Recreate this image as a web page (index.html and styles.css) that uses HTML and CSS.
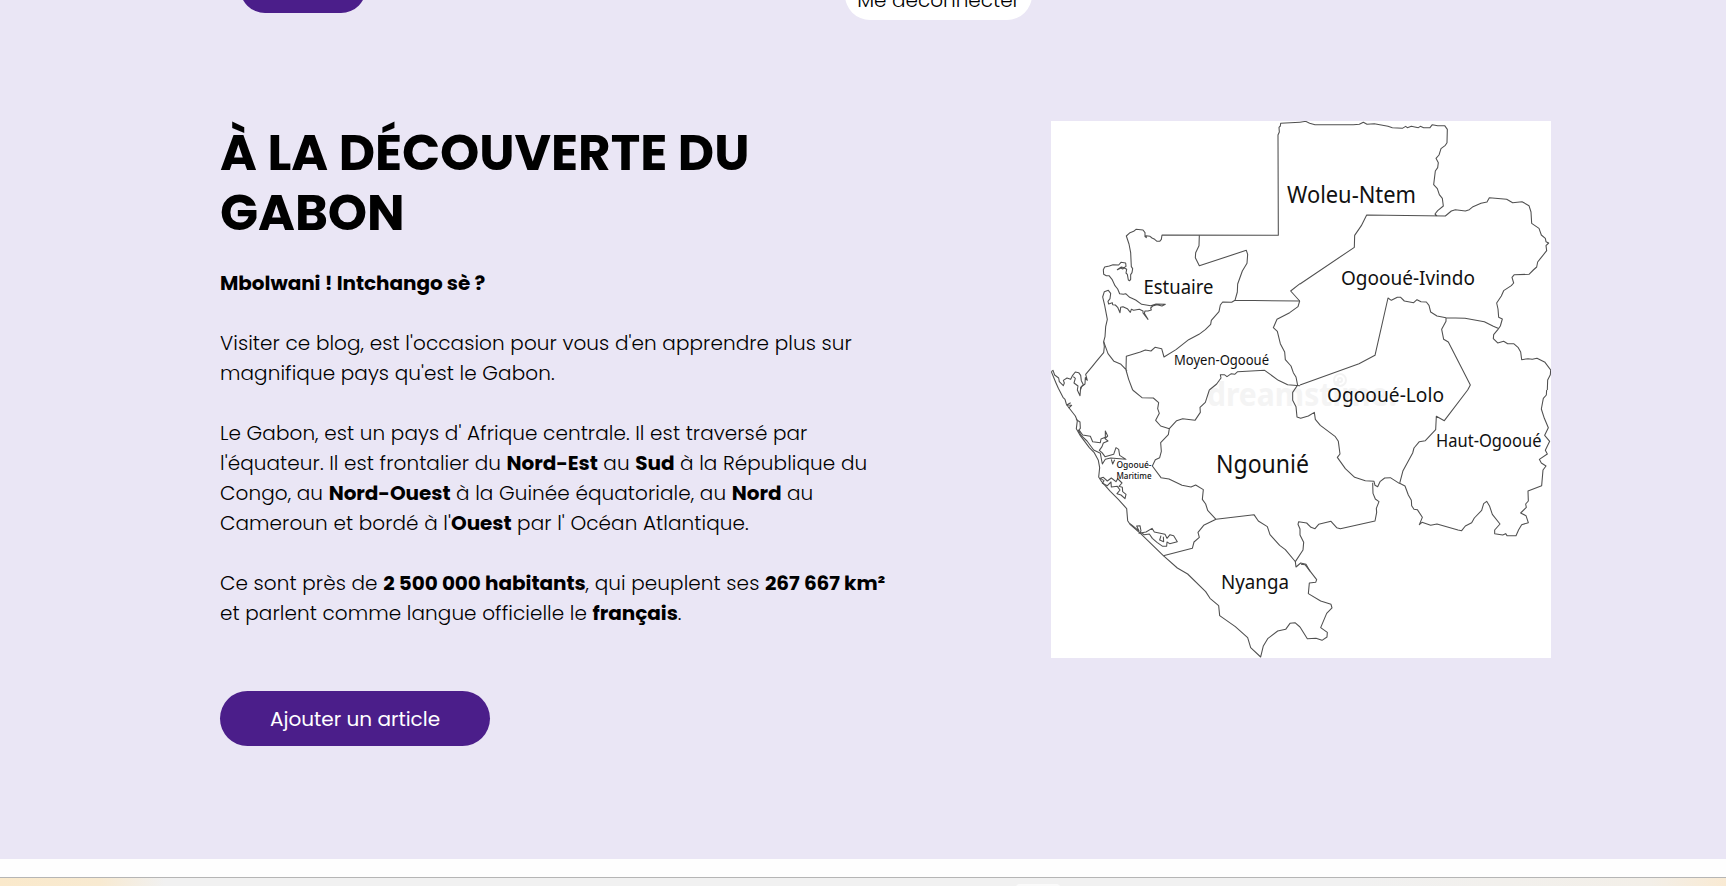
FILE: index.html
```html
<!DOCTYPE html>
<html lang="fr">
<head>
<meta charset="utf-8">
<title>À la découverte du Gabon</title>
<link rel="stylesheet" href="styles.css">
</head>
<body>
<section class="hero">
  <div class="toolbar">
    <span class="pill pill-primary"></span>
    <span class="pill pill-light">Me déconnecter</span>
  </div>
  <div class="intro">
    <div class="copy">
      <h1>À LA DÉCOUVERTE DU<br>GABON</h1>
      <p><strong>Mbolwani ! Intchango sè ?</strong></p>
      <p>Visiter ce blog, est l'occasion pour vous d'en apprendre plus sur<br>magnifique pays qu'est le Gabon.</p>
      <p>Le Gabon, est un pays d' Afrique centrale. Il est traversé par<br>l'équateur. Il est frontalier du <strong>Nord-Est</strong> au <strong>Sud</strong> à la République du<br>Congo, au <strong>Nord-Ouest</strong> à la Guinée équatoriale, au <strong>Nord</strong> au<br>Cameroun et bordé à l'<strong>Ouest</strong> par l' Océan Atlantique.</p>
      <p>Ce sont près de <strong>2 500 000 habitants</strong>, qui peuplent ses <strong>267 667 km²</strong><br>et parlent comme langue officielle le <strong>français</strong>.</p>
      <a class="cta">Ajouter un article</a>
    </div>
    <svg class="map" viewBox="0 0 500 537">
      <text class="watermark" x="156" y="285" textLength="190" lengthAdjust="spacingAndGlyphs">dreamstime.</text>
      <circle class="swirl" cx="289" cy="259" r="6"/><circle class="swirl" cx="289" cy="259" r="2"/>
      <g class="borders">
        <!-- north-west -->
        <g transform="translate(-1 -1) scale(.33333)">
          <path d="M750 7 L692 10 L691 18 L687 22 L688 36 L684 45 L685 346 L336 345 L334 358 L329 364 L321 364 L314 358 L306 354 L300 349 L288 347 L289 353 L285 350 L285 338 L279 330 L258 328 L251 334 L240 338 L229 348 L237 372 L242 398 L244 440 L248 446 L246 458 L242 464 L242 478 L239 482 L235 480 L232 463 L228 459 L230 448 L223 444 L218 447 L213 444 L202 449 L206 446 L214 441 L222 443 L228 439 L227 429 L213 427 L206 435 L189 434 L178 438 L164 441 L160 449 L161 463 L169 467 L177 467 L186 478 L195 497 L203 507 L209 521 L220 523 L227 521 L239 532 L257 540 L275 553 L302 557 L318 552 L346 553 L336 558 L321 554 L308 558 L302 564 L304 570 L294 573 L285 573 L283 580 L294 598 L279 579 L279 573 L268 568 L251 571 L244 568 L241 577 L232 566 L219 560 L212 562 L210 578 L203 562 L196 555 L188 554 L187 548 L176 552 L174 544 L180 536 L182 520 L175 511 L163 515 L158 531 L164 556 L172 598 L167 620 L165 650 L161 665 L163 680 L161 698 L139 724 L127 739 L107 763 L112 781 L106 773 L105 792 L95 800 L92 808"/>
          <path d="M448 346 L447 377 L437 398 L436 413 L448 437 L589 391 L593 403 L591 430 L577 453 L563 492 L562 516 L555 541 L750 543 M555 541 L545 547 L518 546 L511 555 L507 575 L484 601 L482 613 L466 629 L447 643 L416 659 L378 689 L342 711 L335 686 L315 682 L303 693 L286 690 L271 696 L229 709 L228 750 L236 778 L248 810 M161 665 L174 701 L192 724 L213 733 L231 752"/>
          <path d="M750 491 L722 513 L749 543 L744 560 L719 578 L681 598 L670 623 L682 634 L691 671 L704 696 L706 719 L723 738 L730 758 L738 771 L743 796 M750 797 L713 794 L685 781 L644 751 L563 755 L554 763 L544 761 L531 770 L523 764 L511 764 L513 774 L500 792 L478 810"/>
        </g>
        <!-- north-east -->
        <g transform="translate(249 -1) scale(.33333)">
          <path d="M0 7 L17 4 L29 10 L45 14 L160 14 L178 13 L190 7 L201 13 L223 11 L264 19 L277 23 L307 25 L317 19 L322 23 L334 19 L355 23 L361 19 L371 23 L390 23 L397 14 L413 17 L434 17 L442 28 L441 68 L436 76 L423 86 L417 105 L408 115 L415 128 L413 143 L406 153 L401 194 L412 206 L418 224 L427 235 L430 258 L413 272 L405 282 L412 289 M0 492 L163 382 L164 346 L184 317 L200 285 L436 288 L454 273 L466 269 L496 273 L508 269 L519 260 L543 250 L561 246 L568 233 L620 238 L638 248 L666 245 L687 257 L693 276 L695 310 L717 325 L724 345 L736 355 L738 365 L746 369 L738 377 L740 392 L721 416 L713 426 L710 441 L700 450 L687 463 L643 464 L636 472 L641 489 L634 497 L611 512 L604 528 L590 549 L594 567 L596 592 L607 597 L601 618 L594 628 L581 644 L580 656 L593 669 L611 664 L623 671 L641 671 L654 682 L662 696 L665 719 L684 716 L697 718 L711 715 L735 727 L752 750 L751 764 L743 780 L742 810"/>
          <path d="M0 795 L177 731 L225 706 L264 534 L274 541 L292 532 L302 532 L313 543 L341 548 L351 539 L363 545 L379 546 L387 556 L392 576 L411 588 L438 593 L495 595 L553 605 L580 619 L594 625 M438 593 L438 604 L425 628 L431 658 L445 666 L511 795 L503 810"/>
        </g>
        <!-- south-west -->
        <g transform="translate(-1 269) scale(.33333)">
          <path d="M4 -55 L18 -21 L25 -5 L39 22 L45 28 L49 42 L55 51 L76 78 L82 92 L79 116 L91 137 L118 173 L132 187 L145 211 L149 233 L146 261 L155 275 L181 304 L205 328 L230 356 L233 392 L240 403 L272 431 L340 497 L382 534 L413 552 L467 605 L480 625 L506 647 L509 677 L556 710 L593 743 L602 773 L632 801 L640 768 L654 745 L683 723 L707 718 L720 700 L735 698 L750 711"/>
          <path d="M4 -55 L9 -59 L14 -45 L26 -36 L28 -25 L40 -13 L43 -21 L40 -29 L51 -36 L62 -32 L68 -44 L76 -54 L86 -52 L92 -44 L94 -28 L100 -16 L92 -8 L90 17 L82 0 L84 -12 L72 -21 L76 -35 L70 -40 M62 38 L50 45 L65 46 L56 54 M78 88 L90 96 L91 115 L85 122 L94 137 L111 153 L131 180 L151 190 L157 222 L166 208 L182 204 L228 208 L209 196 L206 178 L198 173 L191 193 L165 200 L156 188 L148 181 L156 170 L160 159 L174 153 L165 146 L173 138 L166 123 L166 142 L153 147 L151 158 L128 155 L121 139 L98 135 L88 121 M184 208 L188 222 L194 209"/>
          <path d="M151 265 L162 272 L157 280 L172 287 L183 276 L184 291 L202 289 L210 300 L201 311 L213 315 L225 326 L228 313 L218 305 L217 292 L207 289 L216 279 L203 266 L198 275 L184 264 L172 273 L160 262 Z M240 401 L267 423 L260 408 L270 407 L273 423 L267 430 L288 426 L306 415 L313 426 L345 433 L351 445 L360 434 L371 437 L382 455 L359 461 L351 456 L350 469 L338 469 L321 457 L307 445 L298 432 L283 434 L269 426 M333 437 L329 450 L341 455 L340 440"/>
          <path d="M248 0 L276 23 L310 24 L326 38 L323 56 L328 70 L317 91 L332 108 L358 116 L380 92 L398 86 L435 91 L451 67 L450 52 L466 37 L478 0 M358 116 L355 134 L332 158 L334 184 L329 203 L316 209 L307 228 L333 263 L357 267 L396 286 L423 291 L437 285 L460 299 L457 328 L467 342 L473 361 L498 388 L612 374 L625 393 L652 410 L660 434 L689 466 L706 479 L737 516 M498 388 L461 406 L444 427 L448 442 L432 456 L427 475 L340 497"/>
        </g>
        <!-- Ngounié and Nyanga -->
        <g transform="translate(139 219) scale(.33333)">
          <path d="M323 135 L308 157 L308 181 L318 200 L321 231 L332 235 L355 228 L373 217 L376 238 L391 256 L436 290 L445 304 L450 342 L442 352 L466 386 L494 412 L526 422 L552 424 L555 436 L563 440 L570 425 L584 414 L601 413 L629 431 M548 428 L549 460 L556 477 L567 485 L559 505 L560 517 L555 543 L451 566 L440 563 L423 544 L386 553 L375 566 L363 562 L350 549 L326 545 L324 553 L330 567 L330 585 L341 607 L339 630 L316 665 L318 681 L332 669 L348 673 L360 694"/>
        </g>
        <!-- south-east -->
        <g transform="translate(249 269) scale(.33333)">
          <path d="M503 0 L433 92 L409 79 L407 119 L376 152 L358 155 L342 174 L338 189 L309 242 L299 280 L315 288 L325 315 L334 331 L335 347 L342 358 L352 359 L367 382 L358 404 L366 397 L392 406 L411 402 L474 420 L485 422 L496 408 L515 398 L523 384 L545 361 L551 341 L560 334 L569 349 L577 373 L600 402 L584 420 L584 431 L608 435 L617 431 L621 437 L648 437 L656 419 L665 404 L685 398 L678 377 L662 369 L679 352 L677 342 L685 333 L684 303 L725 287 L729 240 L738 228 L724 219 L718 208 L742 192 L736 181 L749 154 L734 136 L745 113 L733 85 L724 57 L730 25 L739 15 L740 0"/>
          <path d="M3 523 L15 524 L50 569 L47 577 L28 579 L25 611 L62 633 L93 643 L96 654 L80 670 L62 713 L82 727 L81 741 L66 751 L48 745 L22 746 L0 711"/>
        </g>
      </g>
      <g class="labels">
        <text x="236" y="81.500" font-size="23.500" textLength="129" lengthAdjust="spacingAndGlyphs">Woleu-Ntem</text>
        <text x="92.500" y="172.600" font-size="20" textLength="70" lengthAdjust="spacingAndGlyphs">Estuaire</text>
        <text x="123" y="244" font-size="14" textLength="95" lengthAdjust="spacingAndGlyphs">Moyen-Ogooué</text>
        <text x="290" y="164" font-size="20.500" textLength="134" lengthAdjust="spacingAndGlyphs">Ogooué-Ivindo</text>
        <text x="276" y="281" font-size="20.500" textLength="117" lengthAdjust="spacingAndGlyphs">Ogooué-Lolo</text>
        <text x="385" y="325.500" font-size="18" textLength="105.500" lengthAdjust="spacingAndGlyphs">Haut-Ogooué</text>
        <text x="165" y="351.500" font-size="25.500" textLength="93" lengthAdjust="spacingAndGlyphs">Ngounié</text>
        <text x="170" y="468" font-size="20" textLength="68" lengthAdjust="spacingAndGlyphs">Nyanga</text>
        <text class="small" x="65.500" y="347" font-size="9" textLength="35" lengthAdjust="spacingAndGlyphs">Ogooué-</text>
        <text class="small" x="65.500" y="358" font-size="9" textLength="35" lengthAdjust="spacingAndGlyphs">Maritime</text>
      </g>
    </svg>
  </div>
</section>
<section class="next"><span class="tab"></span></section>
</body>
</html>
```
FILE: styles.css
```css
* { box-sizing: border-box; }
body {
  margin: 0;
  height: 886px;
  overflow: hidden;
  background: #fefefe;
  color: #000;
  font-family: Poppins, Inter, sans-serif;
  font-size: 20px;
  line-height: 30px;
  font-weight: 300;
  letter-spacing: .08px;
}
.hero {
  height: 859px;
  background: #eae6f5;
  overflow: hidden;
}
.toolbar {
  height: 20px;
  padding-left: 240px;
  display: flex;
  align-items: flex-end;
}
.pill {
  height: 55px;
  border-radius: 25px;
  flex: none;
}
.pill-primary {
  width: 126px;
  margin-bottom: 7px;
  background: #4b1e8a;
}
.pill-light {
  width: 187px;
  height: 50px;
  margin-left: 479px;
  padding-top: 15px;
  background: #fff;
  text-align: center;
  font-size: 20px;
  letter-spacing: 0;
}
.intro {
  display: flex;
  align-items: flex-start;
  justify-content: space-between;
  padding: 101px 175px 0 220px;
}
.copy { width: 700px; white-space: nowrap; }
h1 {
  margin: 0 0 25px;
  padding-top: 2px;
  font-size: 50px;
  line-height: 60px;
  font-weight: 700;
  letter-spacing: -.02px;
}
p { margin: 0 0 30px; }
strong { font-weight: 700; letter-spacing: -.05px; }
.cta {
  display: flex;
  align-items: center;
  justify-content: center;
  width: 270px;
  height: 55px;
  margin-top: 63px;
  border-radius: 28px;
  background: #4b1e8a;
  color: #fff;
  font-weight: 400;
  letter-spacing: 0;
}
.map {
  flex: none;
  width: 500px;
  height: 537px;
  background: #fff;
  letter-spacing: 0;
}
.borders path {
  fill: none;
  stroke: #505050;
  stroke-width: 3.2;
  stroke-linejoin: round;
}
.labels {
  fill: #111;
  font-family: "Noto Sans", "Open Sans", sans-serif;
  font-weight: 400;
}
.small { font-weight: 500; }
.watermark {
  fill: #f4f4f4;
  font: 700 32px "Noto Sans", sans-serif;
}
.swirl { fill: none; stroke: #f3f3f3; stroke-width: 2; }
.next {
  height: 9px;
  margin-top: 18px;
  padding: 6px 0 0 1015px;
  border-top: 1px solid #b5b5b5;
  background: linear-gradient(90deg, #fae9cb 0, #f8ead1 100px, #f1f1f1 165px, #f1f1f1 1350px, #f3efe8 1650px, #f9ead3 1726px);
  overflow: hidden;
}
.tab {
  display: block;
  width: 46px;
  height: 10px;
  border-radius: 5px;
  background: #fafafa;
}
```
